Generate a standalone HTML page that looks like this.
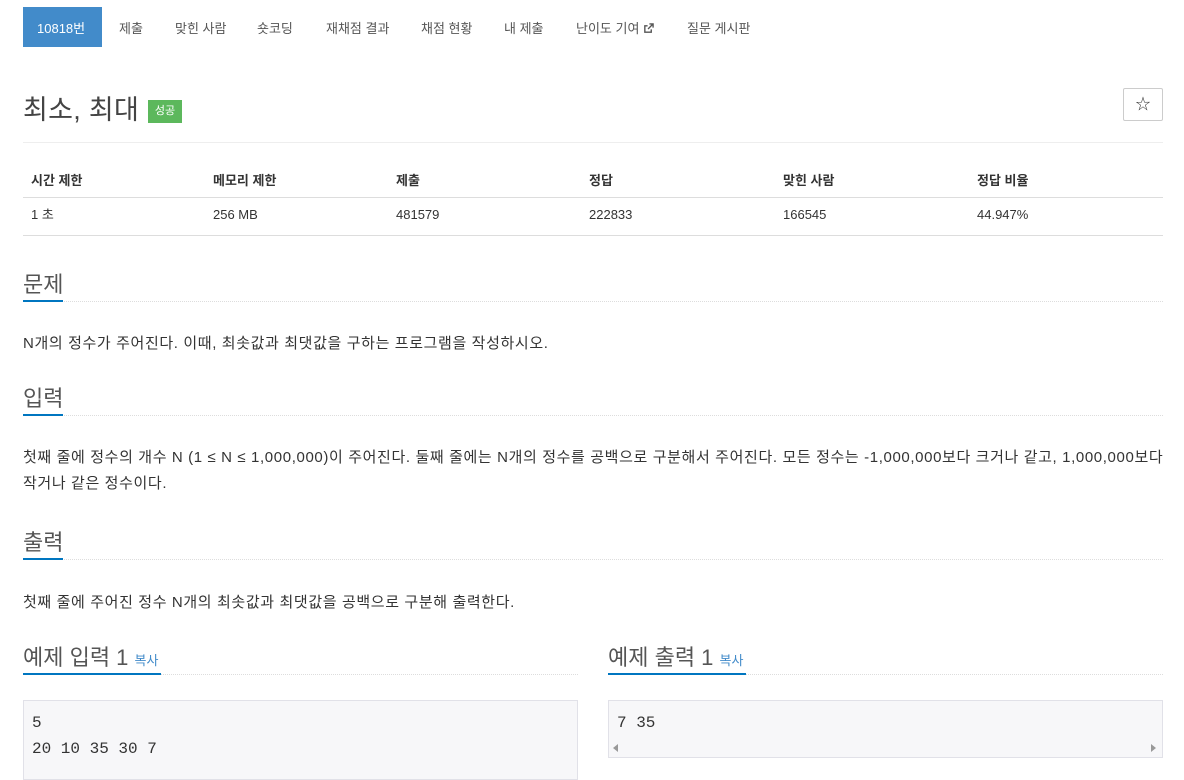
<!DOCTYPE html>
<html><head><meta charset="utf-8"><style>
*{box-sizing:border-box;margin:0;padding:0}
body{width:1184px;height:762px;overflow:hidden;background:#fff;font-family:"Liberation Sans","Noto Sans CJK KR",sans-serif;color:#333;position:relative}
.a{position:absolute;white-space:nowrap}
.nav{font-size:13px;color:#555;top:18px}
.h2{font-size:22px;color:#555}
.ul{position:absolute;height:2px;background:#0076c0}
.dot{position:absolute;height:0;border-top:1px dotted #ddd}
.p{font-size:15px;color:#333;letter-spacing:0.62px}
.th{font-size:13px;font-weight:bold;top:172px;line-height:18px}
.td{font-size:13px;top:206px;line-height:18px}
pre{position:absolute;font-family:"Liberation Mono",monospace;font-size:16px;line-height:26px;background:#f7f7f9;border:1px solid #e1e1e8;padding:9px 8px;color:#333}
</style></head><body>
<div class="a" style="left:23px;top:7px;width:79px;height:40px;background:#428bca"></div>
<div class="a nav" style="left:37px;color:#fff">10818번</div>
<div class="a nav" style="left:119px">제출</div>
<div class="a nav" style="left:175px">맞힌 사람</div>
<div class="a nav" style="left:257px">숏코딩</div>
<div class="a nav" style="left:326px">재채점 결과</div>
<div class="a nav" style="left:421px">채점 현황</div>
<div class="a nav" style="left:504px">내 제출</div>
<div class="a nav" style="left:576px">난이도 기여 <svg width="11" height="11" viewBox="0 0 12 12" style="vertical-align:-1px"><path d="M9 7v3H2V3h3M7 1h4v4M11 1L5.5 6.5" stroke="#555" stroke-width="1.5" fill="none"/></svg></div>
<div class="a nav" style="left:687px">질문 게시판</div>

<div class="a" style="left:23px;top:88px;font-size:27px;color:#444;letter-spacing:0.3px">최소, 최대</div>
<div class="a" style="left:148px;top:100px;width:34px;height:23px;background:#5cb85c;color:#fff;font-size:11px;line-height:23px;text-align:center">성공</div>
<div class="a" style="left:1123px;top:88px;width:40px;height:33px;border:1px solid #ccc;border-radius:2px;text-align:center;line-height:31px;font-size:15px;color:#333">☆</div>
<div class="a" style="left:23px;top:142px;width:1140px;border-top:1px solid #eee"></div>

<div class="a th" style="left:31px">시간 제한</div>
<div class="a th" style="left:213px">메모리 제한</div>
<div class="a th" style="left:396px">제출</div>
<div class="a th" style="left:589px">정답</div>
<div class="a th" style="left:783px">맞힌 사람</div>
<div class="a th" style="left:977px">정답 비율</div>
<div class="a" style="left:23px;top:197px;width:1140px;border-top:1px solid #ddd"></div>
<div class="a td" style="left:31px">1 초</div>
<div class="a td" style="left:213px">256 MB</div>
<div class="a td" style="left:396px">481579</div>
<div class="a td" style="left:589px">222833</div>
<div class="a td" style="left:783px">166545</div>
<div class="a td" style="left:977px">44.947%</div>
<div class="a" style="left:23px;top:235px;width:1140px;border-top:1px solid #ddd"></div>

<div class="a h2" style="left:23px;top:267px">문제</div>
<div class="dot" style="left:23px;top:301px;width:1140px"></div>
<div class="ul" style="left:23px;top:300px;width:40px"></div>
<div class="a p" style="left:23px;top:332px">N개의 정수가 주어진다. 이때, 최솟값과 최댓값을 구하는 프로그램을 작성하시오.</div>

<div class="a h2" style="left:23px;top:381px">입력</div>
<div class="dot" style="left:23px;top:415px;width:1140px"></div>
<div class="ul" style="left:23px;top:414px;width:40px"></div>
<div class="a p" style="left:23px;top:446px">첫째 줄에 정수의 개수 N (1 ≤ N ≤ 1,000,000)이 주어진다. 둘째 줄에는 N개의 정수를 공백으로 구분해서 주어진다. 모든 정수는 -1,000,000보다 크거나 같고, 1,000,000보다</div>
<div class="a p" style="left:23px;top:472px">작거나 같은 정수이다.</div>

<div class="a h2" style="left:23px;top:525px">출력</div>
<div class="dot" style="left:23px;top:559px;width:1140px"></div>
<div class="ul" style="left:23px;top:558px;width:40px"></div>
<div class="a p" style="left:23px;top:591px">첫째 줄에 주어진 정수 N개의 최솟값과 최댓값을 공백으로 구분해 출력한다.</div>

<div class="a h2" style="left:23px;top:640px">예제 입력 1 <span style="font-size:13px;color:#428bca">복사</span></div>
<div class="dot" style="left:23px;top:674px;width:555px"></div>
<div class="ul" style="left:23px;top:673px;width:138px"></div>
<pre style="left:23px;top:700px;width:555px;height:80px">5
20 10 35 30 7</pre>

<div class="a h2" style="left:608px;top:640px">예제 출력 1 <span style="font-size:13px;color:#428bca">복사</span></div>
<div class="dot" style="left:608px;top:674px;width:555px"></div>
<div class="ul" style="left:608px;top:673px;width:138px"></div>
<pre style="left:608px;top:700px;width:555px;height:58px">7 35</pre>
<div class="a" style="left:613px;top:744px;width:0;height:0;border:4px solid transparent;border-right:5px solid #999;border-left:0"></div>
<div class="a" style="left:1151px;top:744px;width:0;height:0;border:4px solid transparent;border-left:5px solid #999;border-right:0"></div>
</body></html>
